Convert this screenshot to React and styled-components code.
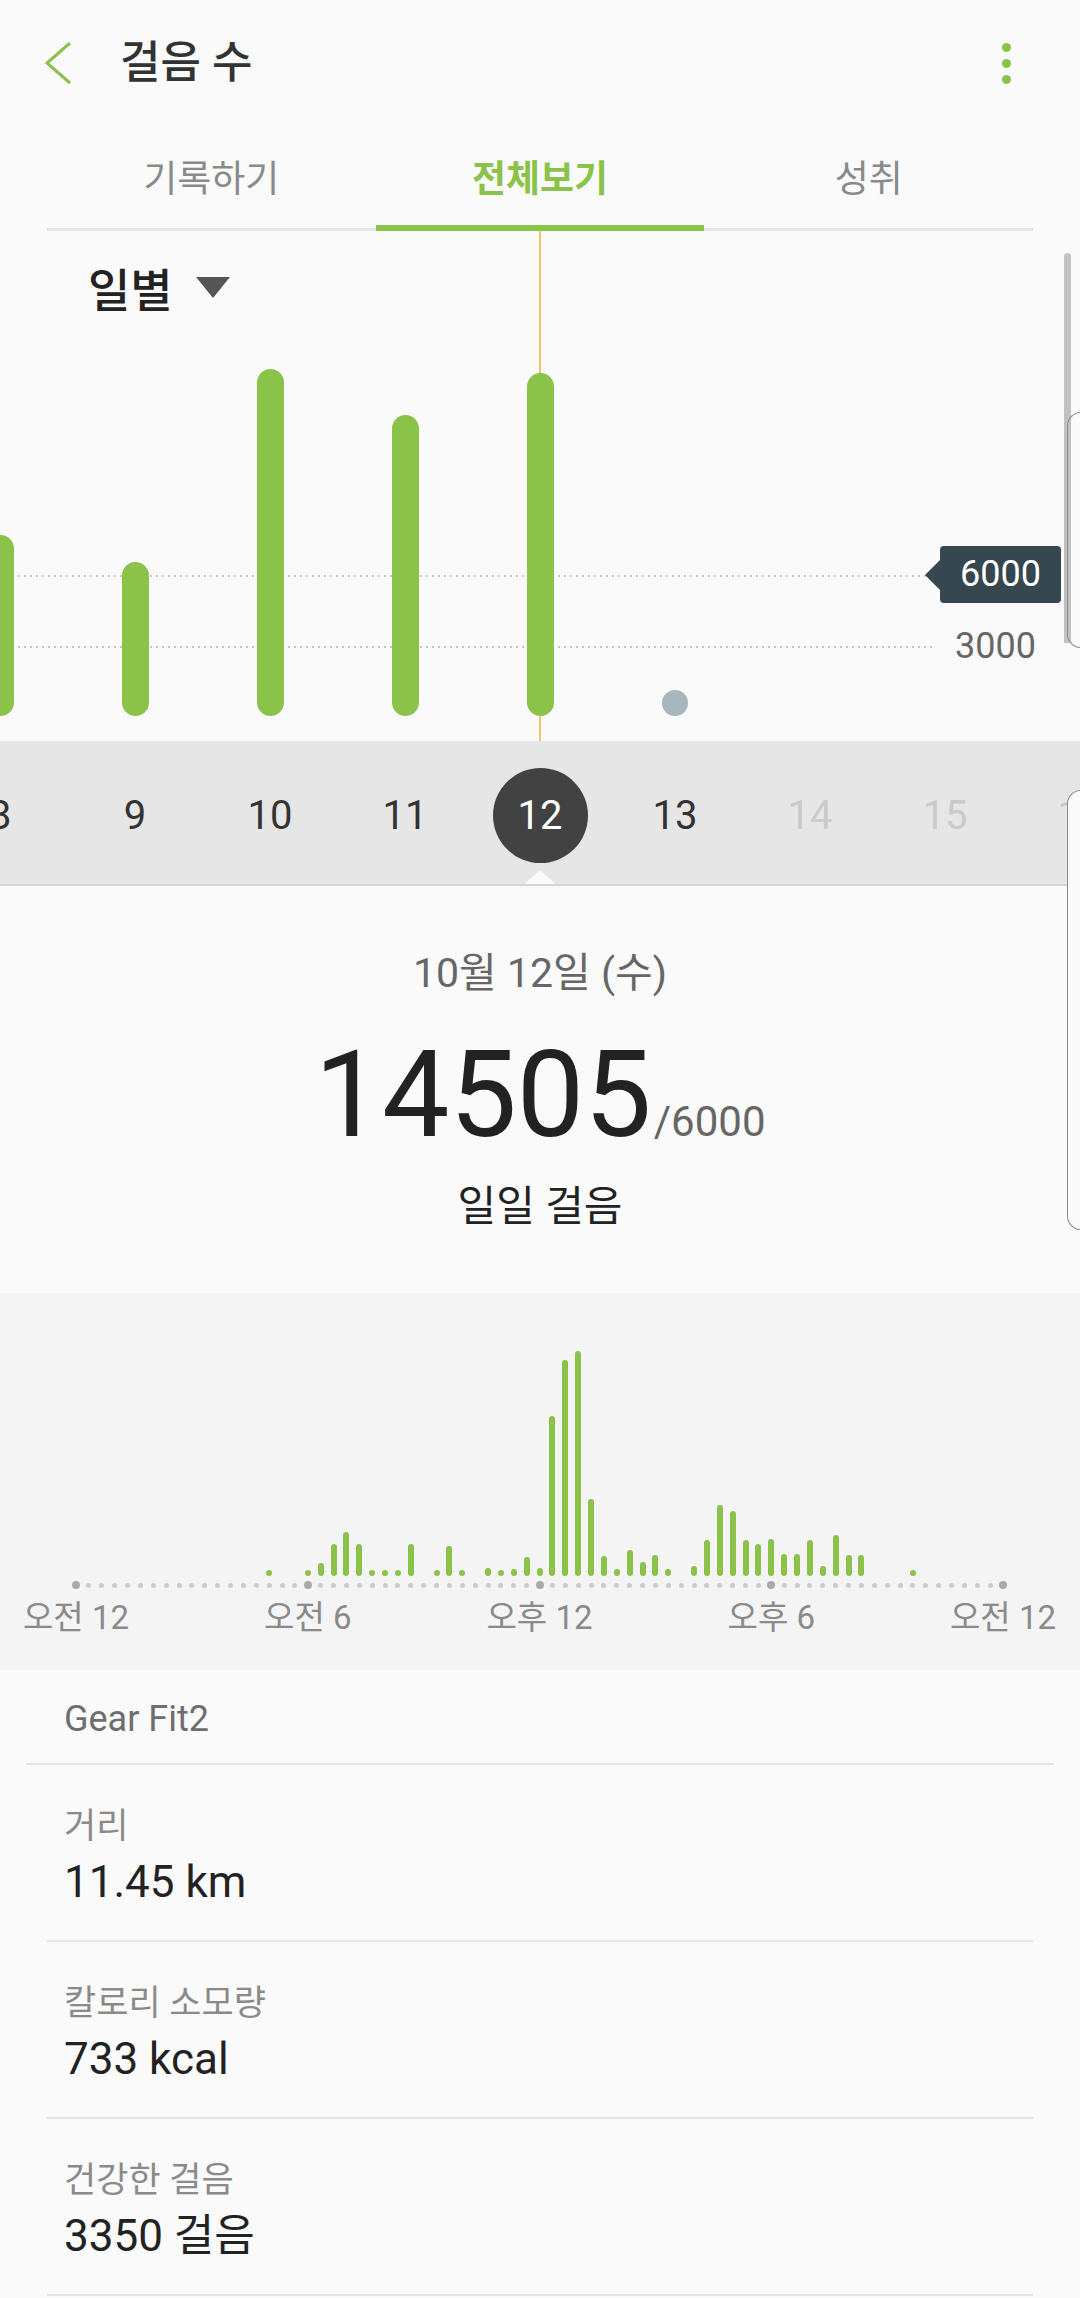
import React from 'react';
import styled, { createGlobalStyle } from 'styled-components';

const GREEN = '#8bc34a';

const GlobalStyle = createGlobalStyle`
  html, body {
    margin: 0;
    padding: 0;
    background: #fafafa;
  }
  body {
    font-family: Roboto, "Noto Sans CJK KR", sans-serif;
  }
  * {
    box-sizing: border-box;
  }
`;

const Page = styled.div`
    position: relative;
    width: 1080px;
    height: 2298px;
    overflow: hidden;
    background: #fafafa;
    color: #222;
`;

/* ---------- header ---------- */

const Header = styled.div`
    height: 126px;
    display: flex;
    align-items: center;
    padding-left: 44px;
`;

const BackIcon = styled.svg`
    width: 30px;
    height: 44px;
    flex: none;
`;

const Title = styled.h1`
    margin: 0 0 0 46px;
    font-size: 44px;
    line-height: 50px;
    font-weight: 500;
    color: #333;
`;

const Kebab = styled.div`
    margin-left: auto;
    margin-right: 69px;
    display: flex;
    flex-direction: column;
    gap: 7px;
    span {
        width: 9px;
        height: 9px;
        border-radius: 50%;
        background: ${GREEN};
    }
`;

/* ---------- tabs ---------- */

const TabBar = styled.div`
    margin: 0 47px;
    display: flex;
    border-bottom: 3px solid #e4e4e4;
`;

const Tab = styled.div`
    flex: 1;
    position: relative;
    text-align: center;
    padding: 35px 0 29px;
    font-size: 37px;
    line-height: 38px;
    color: ${p => (p.$active ? GREEN : '#8a8a8a')};
    font-weight: ${p => (p.$active ? 700 : 400)};
    &::after {
        content: '';
        position: absolute;
        left: 0;
        right: 0;
        bottom: -3px;
        height: 6px;
        background: ${p => (p.$active ? GREEN : 'transparent')};
    }
`;

/* ---------- daily chart ---------- */

const ChartArea = styled.div`
    position: relative;
    height: 510px;
    display: flex;
    flex-direction: column;
    overflow: hidden;
`;

const ModeSelect = styled.div`
    position: relative;
    z-index: 2;
    display: flex;
    align-items: center;
    gap: 23px;
    margin: 30px 0 0 88px;
    height: 52px;
    font-size: 46px;
    font-weight: 500;
    color: #222;
`;

const Caret = styled.span`
    width: 0;
    height: 0;
    border-left: 17px solid transparent;
    border-right: 17px solid transparent;
    border-top: 21px solid #555;
`;

const SelectedLine = styled.div`
    position: absolute;
    left: 539px;
    top: 0;
    bottom: 0;
    width: 2px;
    background: #eec664;
`;

const GuideLine = styled.div`
    position: absolute;
    left: 0;
    top: ${p => p.$top}px;
    width: ${p => p.$width}px;
    height: 2px;
    background-image: linear-gradient(to right, #c6c6c6 2px, transparent 2px);
    background-size: 6px 2px;
`;

const GoalTag = styled.div`
    position: absolute;
    z-index: 2;
    left: 940px;
    top: 315px;
    width: 121px;
    height: 57px;
    border-radius: 4px;
    background: #37474f;
    color: #fff;
    font-size: 36px;
    line-height: 57px;
    text-align: center;
    &::before {
        content: '';
        position: absolute;
        left: -15px;
        top: 14px;
        border-top: 15px solid transparent;
        border-bottom: 15px solid transparent;
        border-right: 15px solid #37474f;
    }
`;

const AxisValue = styled.div`
    position: absolute;
    left: 955px;
    top: 395px;
    font-size: 36px;
    line-height: 40px;
    color: #666;
`;

const BarsRow = styled.div`
    position: relative;
    z-index: 1;
    flex: 1;
    display: flex;
    align-items: flex-end;
    margin-left: -67.5px;
    padding-bottom: 25px;
`;

const DayColumn = styled.div`
    flex: 0 0 135px;
    display: flex;
    justify-content: center;
`;

const DayBar = styled.div`
    width: 27px;
    border-radius: 14px;
    background: ${GREEN};
`;

const NoDataDot = styled.div`
    width: 26px;
    height: 26px;
    border-radius: 50%;
    background: #a7b6be;
`;

/* ---------- date strip ---------- */

const DateStrip = styled.div`
    position: relative;
    height: 145px;
    padding-top: 5px;
    background: #e6e6e6;
    border-bottom: 2px solid #d4d4d4;
    display: flex;
    align-items: center;
    overflow: hidden;
`;

const DateRow = styled.div`
    display: flex;
    margin-left: -67.5px;
`;

const DayCell = styled.div`
    flex: 0 0 135px;
    display: flex;
    justify-content: center;
`;

const DayNumber = styled.div`
    width: 95px;
    height: 95px;
    border-radius: 50%;
    display: flex;
    align-items: center;
    justify-content: center;
    font-size: 40px;
    background: ${p => (p.$selected ? '#424242' : 'transparent')};
    color: ${p => (p.$selected ? '#fff' : p.$future ? '#cacaca' : '#333')};
`;

const Pointer = styled.div`
    position: absolute;
    left: 522px;
    bottom: -2px;
    width: 0;
    height: 0;
    border-left: 18px solid transparent;
    border-right: 18px solid transparent;
    border-bottom: 16px solid #fafafa;
`;

/* ---------- summary ---------- */

const Summary = styled.div`
    padding: 65px 0 64px;
    display: flex;
    flex-direction: column;
    align-items: center;
`;

const DateText = styled.div`
    font-size: 41px;
    line-height: 44px;
    color: #666;
`;

const StepsRow = styled.div`
    margin-top: 42px;
    height: 116px;
    display: flex;
    align-items: baseline;
`;

const Steps = styled.span`
    font-size: 120px;
    line-height: 116px;
    color: #222;
`;

const Goal = styled.span`
    font-size: 42px;
    line-height: 1;
    color: #666;
    margin-left: 2px;
`;

const StepsLabel = styled.div`
    margin-top: 32px;
    font-size: 42px;
    line-height: 44px;
    color: #222;
`;

/* ---------- hourly chart ---------- */

const HourSection = styled.div`
    background: #f4f4f4;
    height: 377px;
    padding-top: 43px;
`;

const HourBars = styled.div`
    margin-left: 73px;
    width: 933px;
    height: 240px;
    display: flex;
    justify-content: space-between;
    align-items: flex-end;
`;

const HourBar = styled.div`
    width: 6px;
    border-radius: 3px;
    background: ${GREEN};
`;

const AxisDots = styled.div`
    margin: 5px 0 0 72px;
    width: 935px;
    height: 8px;
    display: flex;
    justify-content: space-between;
    align-items: center;
`;

const AxisTick = styled.div`
    width: 8px;
    height: 8px;
    display: flex;
    align-items: center;
    justify-content: center;
    &::after {
        content: '';
        width: ${p => (p.$major ? 8 : 5)}px;
        height: ${p => (p.$major ? 8 : 5)}px;
        border-radius: 50%;
        background: ${p => (p.$major ? '#a9a9a9' : '#cccccc')};
    }
`;

const AxisLabels = styled.div`
    margin: 11px 0 0 76px;
    width: 927px;
    display: flex;
    justify-content: space-between;
`;

const AxisLabel = styled.div`
    width: 0;
    display: flex;
    justify-content: center;
    white-space: nowrap;
    font-size: 33px;
    line-height: 36px;
    color: #8a8a8a;
`;

/* ---------- details list ---------- */

const DeviceRow = styled.div`
    margin: 0 26px;
    padding: 29px 38px 24px;
    font-size: 36px;
    line-height: 40px;
    color: #6e6e6e;
    border-bottom: 2px solid #e6e6e6;
`;

const StatRow = styled.div`
    margin: 0 47px;
    padding: 42px 17px 30px;
    border-bottom: 2px solid #e6e6e6;
`;

const StatLabel = styled.div`
    font-size: 35px;
    line-height: 40px;
    color: #8a8a8a;
`;

const StatValue = styled.div`
    margin-top: 7px;
    font-size: 44px;
    line-height: 56px;
    color: #222;
`;

/* ---------- overlays at the screen edge ---------- */

const ScrollThumb = styled.div`
    position: absolute;
    left: 1064px;
    top: 253px;
    width: 7px;
    height: 390px;
    border-radius: 4px 4px 0 0;
    background: #c2c2c2;
`;

const EdgeHandle = styled.div`
    position: absolute;
    left: 1067px;
    top: ${p => p.$top}px;
    width: 40px;
    height: ${p => p.$height}px;
    border: 1.5px solid #8a8a8a;
    border-right: none;
    border-radius: 14px 0 0 14px;
    background: ${p => (p.$filled ? '#fafafa' : 'transparent')};
`;

const DAYS = [
    { day: 8, h: 181 },
    { day: 9, h: 154 },
    { day: 10, h: 347 },
    { day: 11, h: 301 },
    { day: 12, h: 343, selected: true },
    { day: 13, empty: true },
    { day: 14, future: true },
    { day: 15, future: true },
    { day: 16, future: true },
];

const HOURLY = {
    15: 6, 18: 6, 19: 13, 20: 32, 21: 44, 22: 32, 23: 6, 24: 6, 25: 6, 26: 32,
    28: 6, 29: 30, 30: 6, 32: 8, 33: 6, 34: 7, 35: 19, 36: 8, 37: 160, 38: 216,
    39: 225, 40: 77, 41: 20, 42: 7, 43: 26, 44: 14, 45: 21, 46: 7, 48: 10, 49: 36,
    50: 71, 51: 65, 52: 36, 53: 32, 54: 37, 55: 22, 56: 22, 57: 36, 58: 10, 59: 41,
    60: 21, 61: 21, 65: 6,
};

const SLOTS = Array.from({ length: 73 }, (_, i) => HOURLY[i] || 0);

const STATS = [
    { label: '거리', value: '11.45 km' },
    { label: '칼로리 소모량', value: '733 kcal' },
    { label: '건강한 걸음', value: '3350 걸음' },
];

const App = () => {
    return (
        <Page>
            <GlobalStyle />
            <Header>
                <BackIcon viewBox="0 0 30 44">
                    <path d="M26 2 L3 22 L26 42" fill="none" stroke={GREEN} strokeWidth="3" />
                </BackIcon>
                <Title>걸음 수</Title>
                <Kebab>
                    <span />
                    <span />
                    <span />
                </Kebab>
            </Header>

            <TabBar>
                <Tab>기록하기</Tab>
                <Tab $active>전체보기</Tab>
                <Tab>성취</Tab>
            </TabBar>

            <ChartArea>
                <SelectedLine />
                <GuideLine $top={344} $width={926} />
                <GuideLine $top={415} $width={934} />
                <GoalTag>6000</GoalTag>
                <AxisValue>3000</AxisValue>
                <ModeSelect>
                    일별
                    <Caret />
                </ModeSelect>
                <BarsRow>
                    {DAYS.map(d => (
                        <DayColumn key={d.day}>
                            {d.h ? <DayBar style={{ height: d.h }} /> : null}
                            {d.empty ? <NoDataDot /> : null}
                        </DayColumn>
                    ))}
                </BarsRow>
            </ChartArea>

            <DateStrip>
                <DateRow>
                    {DAYS.map(d => (
                        <DayCell key={d.day}>
                            <DayNumber $selected={d.selected} $future={d.future}>
                                {d.day}
                            </DayNumber>
                        </DayCell>
                    ))}
                </DateRow>
                <Pointer />
            </DateStrip>

            <Summary>
                <DateText>10월 12일 (수)</DateText>
                <StepsRow>
                    <Steps>14505</Steps>
                    <Goal>/6000</Goal>
                </StepsRow>
                <StepsLabel>일일 걸음</StepsLabel>
            </Summary>

            <HourSection>
                <HourBars>
                    {SLOTS.map((h, i) => (
                        <HourBar key={i} style={{ height: h, opacity: h ? 1 : 0 }} />
                    ))}
                </HourBars>
                <AxisDots>
                    {SLOTS.map((_, i) => (
                        <AxisTick key={i} $major={i % 18 === 0} />
                    ))}
                </AxisDots>
                <AxisLabels>
                    <AxisLabel>오전 12</AxisLabel>
                    <AxisLabel>오전 6</AxisLabel>
                    <AxisLabel>오후 12</AxisLabel>
                    <AxisLabel>오후 6</AxisLabel>
                    <AxisLabel>오전 12</AxisLabel>
                </AxisLabels>
            </HourSection>

            <DeviceRow>Gear Fit2</DeviceRow>
            {STATS.map(s => (
                <StatRow key={s.label}>
                    <StatLabel>{s.label}</StatLabel>
                    <StatValue>{s.value}</StatValue>
                </StatRow>
            ))}

            <ScrollThumb />
            <EdgeHandle $top={412} $height={236} />
            <EdgeHandle $top={790} $height={440} $filled />
        </Page>
    );
};

export default App;
